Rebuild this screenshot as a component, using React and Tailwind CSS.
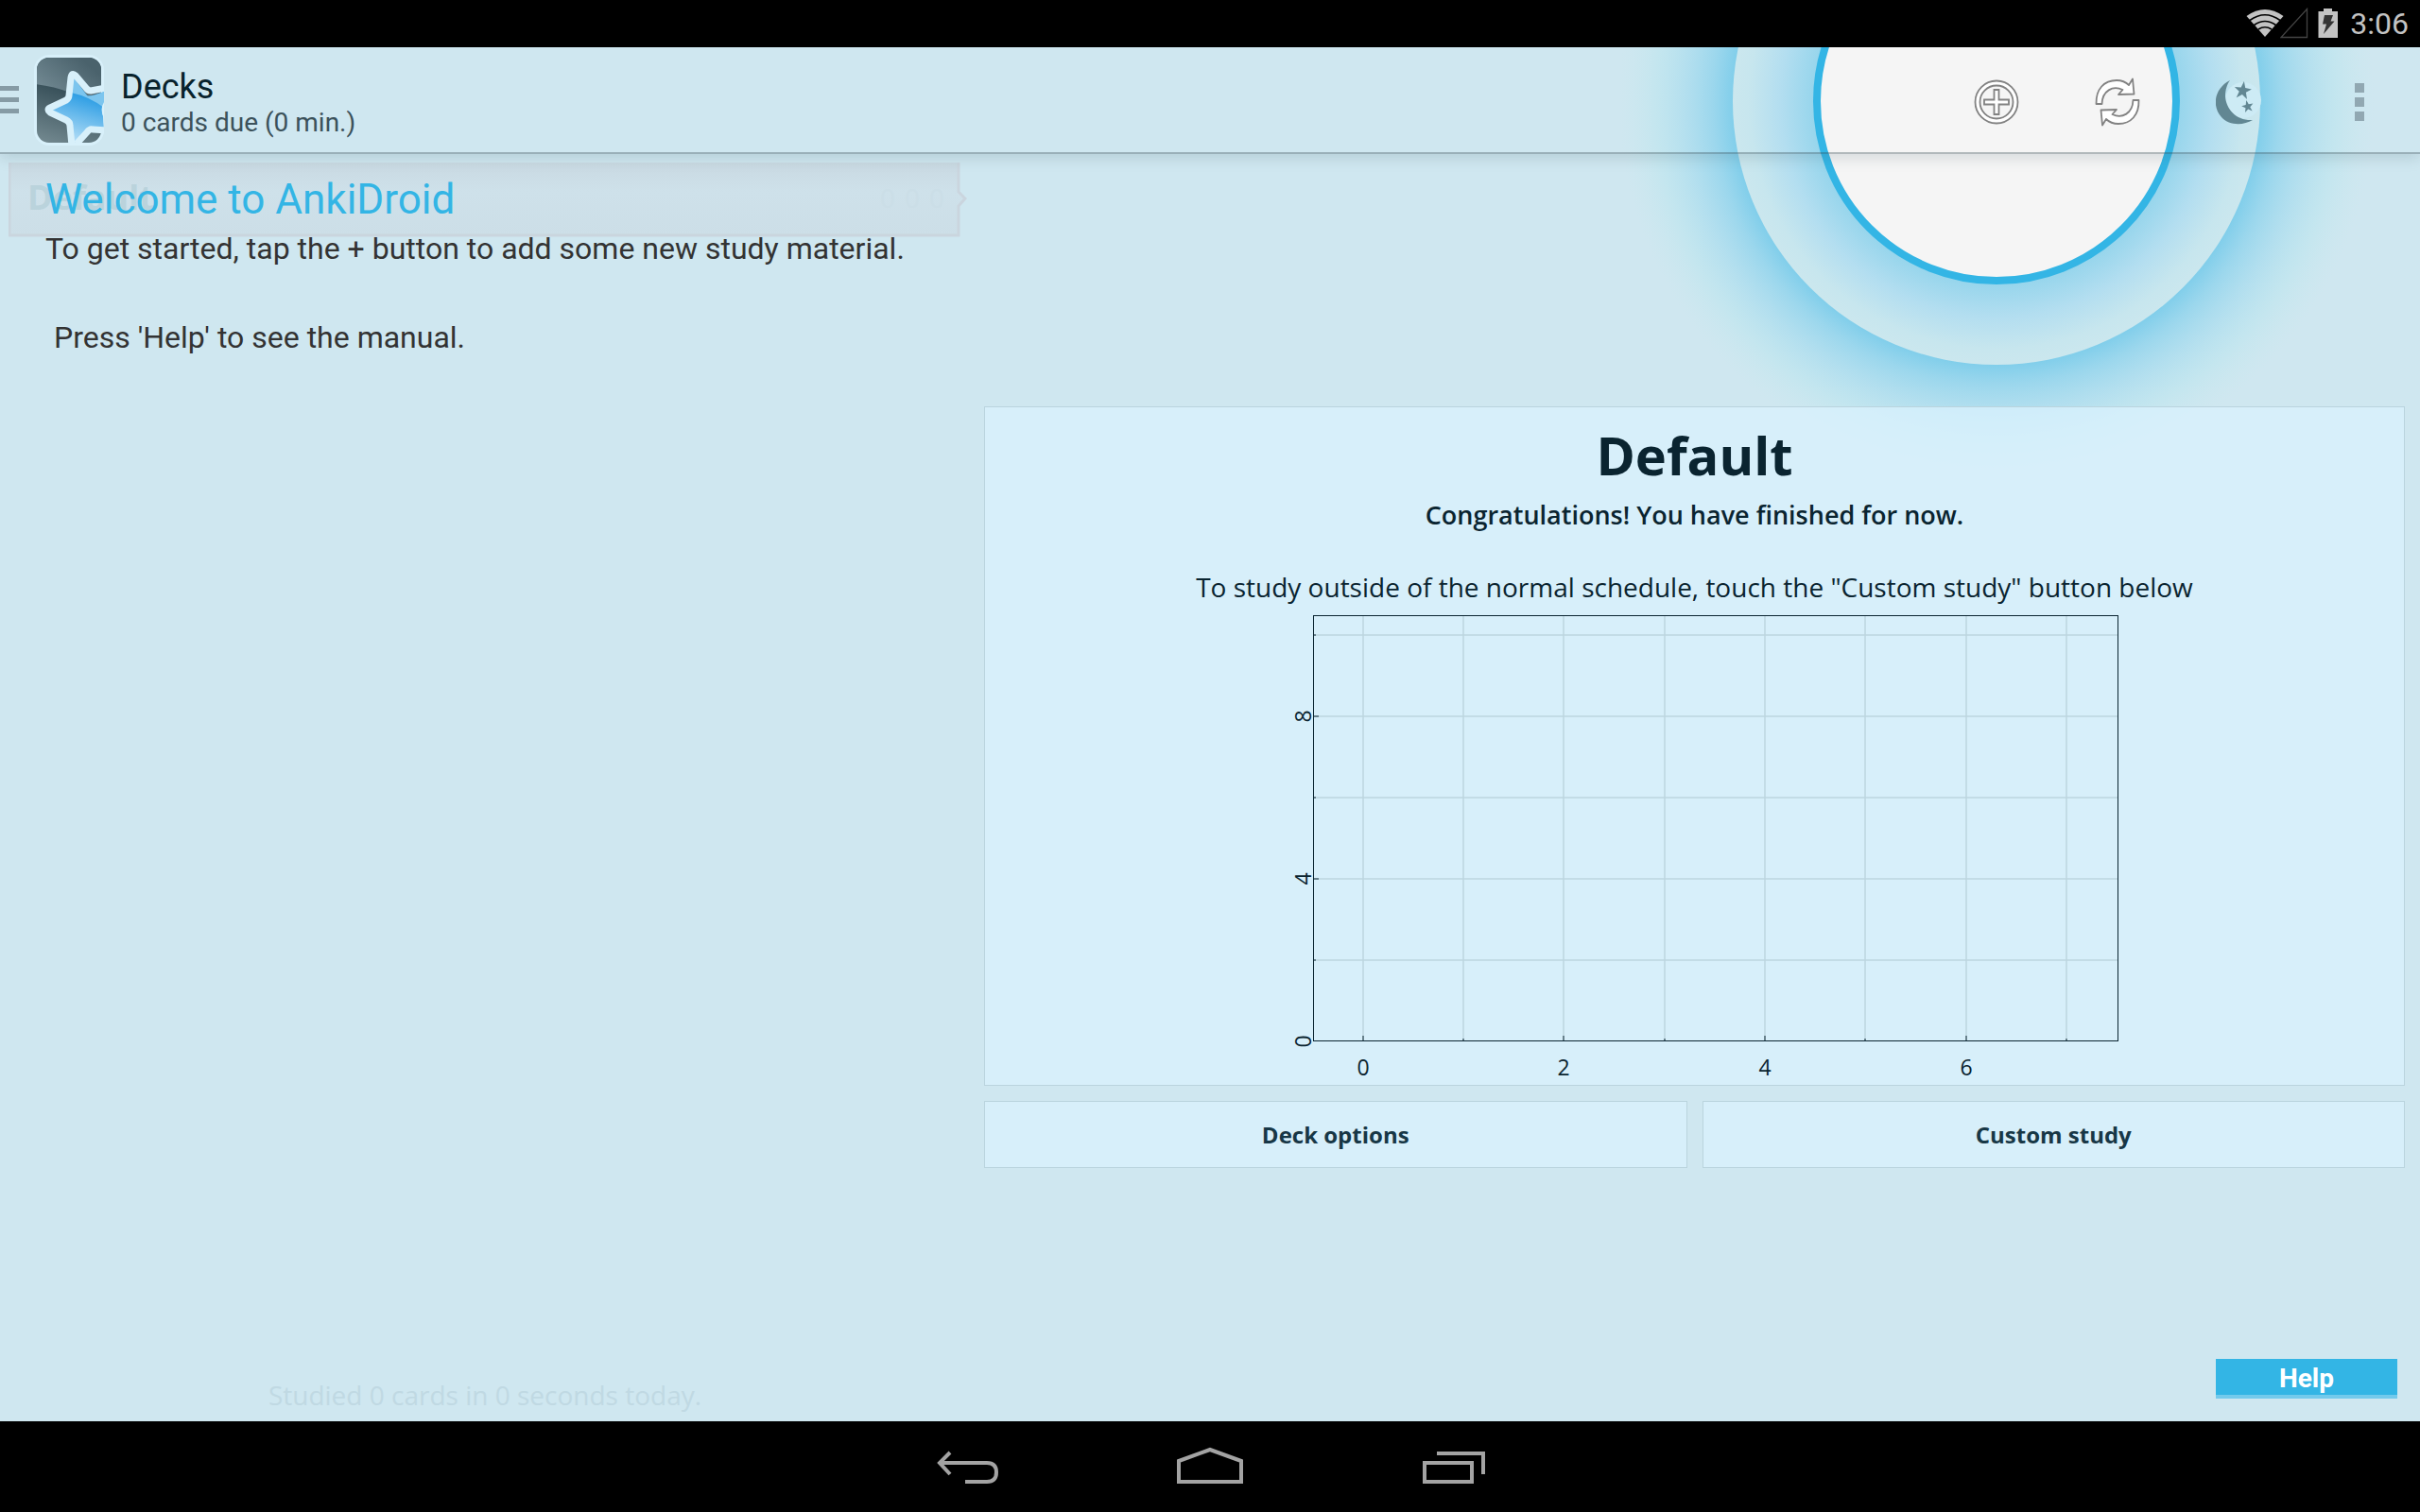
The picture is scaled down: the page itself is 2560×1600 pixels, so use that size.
const STAR = "M50 0L62 36L98 38L69 60L80 96L50 74L20 96L31 60L2 38L38 36Z";

function StatusBar() {
  return (
    <div className="flex h-[50px] shrink-0 items-center justify-end bg-black pr-3 text-[#c3c3c3]">
      <svg width="40" height="34" viewBox="0 0 40 34" aria-label="Wi-Fi">
        <path d="M20 31L0.500 9Q20 -5 39.500 9Z" fill="#c3c3c3" />
        <g fill="none" stroke="#000" strokeWidth="1.600">
          <path d="M4 13.500Q20 2 36 13.500" />
          <path d="M8.500 18.500Q20 10.500 31.500 18.500" />
          <path d="M13 23Q20 18.500 27 23" />
        </g>
      </svg>
      <svg width="30" height="34" viewBox="0 0 30 34" className="-ml-1" aria-label="No signal">
        <path d="M1 31.500H28.500V1.500Z" fill="none" stroke="#444" strokeWidth="1.300" />
      </svg>
      <svg width="22" height="34" viewBox="0 0 22 34" className="ml-2.5" aria-label="Charging">
        <path d="M0.500 32V4H6V1H15V4H21V32Z" fill="#c3c3c3" />
        <path d="M7 8H16L13.500 14.500H17.500L6 28L9 17.500H5Z" fill="#333" />
      </svg>
      <span className="ml-3 text-[32px] leading-[50px]">3:06</span>
    </div>
  );
}

function Spotlight() {
  return (
    <svg
      className="pointer-events-none absolute right-[48px] top-[-343px]"
      width="800"
      height="800"
      viewBox="-400 -400 800 800"
      aria-hidden="true"
    >
      <defs>
        <radialGradient id="outer" gradientUnits="userSpaceOnUse" cx="0" cy="0" r="400">
          <stop offset="0.697" stopColor="#33b5e5" stopOpacity="0.500" />
          <stop offset="0.750" stopColor="#3fbae7" stopOpacity="0.360" />
          <stop offset="0.820" stopColor="#5cc6ea" stopOpacity="0.250" />
          <stop offset="0.900" stopColor="#8fe0ea" stopOpacity="0.180" />
          <stop offset="1" stopColor="#b4ebe9" stopOpacity="0" />
        </radialGradient>
        <radialGradient id="inner" gradientUnits="userSpaceOnUse" cx="0" cy="0" r="279">
          <stop offset="0.690" stopColor="#96d5ec" />
          <stop offset="0.820" stopColor="#b3def0" />
          <stop offset="0.940" stopColor="#c7e6ee" />
          <stop offset="1" stopColor="#cbe7ee" />
        </radialGradient>
      </defs>
      <circle r="400" fill="url(#outer)" />
      <circle r="279" fill="url(#inner)" />
      <circle r="190" fill="#f5f5f5" stroke="#33b5e5" strokeWidth="8" />
    </svg>
  );
}

function Logo() {
  return (
    <svg width="74" height="96" viewBox="0 0 74 96" className="ml-4 shrink-0" aria-label="AnkiDroid">
      <defs>
        <linearGradient id="top" x1="1" y1="0" x2="0" y2="1">
          <stop offset="0.200" stopColor="#4a626c" />
          <stop offset="1" stopColor="#839aa3" />
        </linearGradient>
        <linearGradient id="bottom" x1="0.500" y1="0.200" x2="0.300" y2="1">
          <stop offset="0" stopColor="#263f49" />
          <stop offset="1" stopColor="#72888f" />
        </linearGradient>
        <linearGradient id="star" x1="0.600" y1="0.200" x2="0.400" y2="1">
          <stop offset="0" stopColor="#1f97e2" />
          <stop offset="1" stopColor="#b9e0f7" />
        </linearGradient>
        <clipPath id="card"><rect x="3" y="3" width="68" height="90" rx="13" /></clipPath>
        <clipPath id="starArea"><path d="M0 0H74V93H0Z" /></clipPath>
      </defs>
      <rect width="74" height="96" rx="16" fill="#d8f0fa" />
      <g clipPath="url(#card)">
        <rect width="74" height="96" fill="url(#bottom)" />
        <path d="M0 0H74V60Q40 35 0 31Z" fill="url(#top)" />
      </g>
      <g clipPath="url(#starArea)">
        <path
          d="M41 23L56 43Q58 45 74 39V58Q72 62 74 79L58 78L44 93H40L37 75Q36 72 33 70L15 60V58L34 50Q38 47 38 44Z"
          fill="url(#star)"
        />
        <path d="M41 23L56 43Q58 45 74 39V56Q58 44 39 40Z" fill="#7cc5ee" />
        <g fill="none" stroke="#d8f0fa" strokeWidth="7" strokeLinejoin="round">
          <path d="M76 35L60 38Q57 38 55 35L44 22Q40 18 39 24L37 43Q37 46 34 48L17 56Q13 58 17 61L34 69Q38 71 38 75L40 96" />
          <path d="M45 94L56 82Q59 78 62 79L76 80" />
        </g>
        <path d="M74 50Q69 58 74 67Z" fill="#d8f0fa" />
      </g>
    </svg>
  );
}

function AddIcon() {
  return (
    <svg width="48" height="48" viewBox="0 0 48 48" fill="#fff" stroke="#828282" strokeWidth="1.800" aria-hidden="true">
      <circle cx="24" cy="24" r="22.500" />
      <circle cx="24" cy="24" r="17.500" fill="#f5f5f5" />
      <path d="M21.500 11H26.500V21.500H37V26.500H26.500V37H21.500V26.500H11V21.500H21.500Z" />
    </svg>
  );
}

function SyncIcon() {
  const arrow = "M1.500 28C1 12 10 3 23 3C29 3 33 5 36 8L40 1.500L41.500 17.500L25 18L29.500 13C19 8 8 14 7.500 28Z";
  return (
    <svg width="48" height="52" viewBox="0 0 48 52" fill="#fff" stroke="#828282" strokeWidth="1.800" strokeLinejoin="round" aria-hidden="true">
      <path d={arrow} />
      <path d={arrow} transform="rotate(180 24 26)" />
    </svg>
  );
}

function MoonIcon() {
  return (
    <svg width="48" height="48" viewBox="0 0 48 48" aria-hidden="true">
      <circle cx="29" cy="22" r="19" fill="#cdebf5" />
      <path d="M15 1C-1 9 -5 28 6 40C14 49 29 49 39 43C22 44 11 32 10 18C10 11 12 5 15 1Z" fill="#628793" />
      <path d={STAR} fill="#628793" transform="translate(19 2) rotate(8 10 10) scale(0.190)" />
      <path d={STAR} fill="#628793" transform="translate(27 22) rotate(-12 6 6) scale(0.130)" />
    </svg>
  );
}

function ActionBar() {
  return (
    <header className="relative z-10 flex h-[113px] shrink-0 items-center border-b-2 border-[#33484f]/35 shadow-[0_4px_14px_rgba(60,90,100,0.18)]">
      <button aria-label="Menu" className="flex h-full w-5 shrink-0 flex-col justify-center gap-[7px]">
        <span className="h-[5px] w-full bg-[#869ba5]" />
        <span className="h-[5px] w-full bg-[#869ba5]" />
        <span className="h-[5px] w-full bg-[#869ba5]" />
      </button>
      <Logo />
      <div className="ml-[18px] flex-1 pt-2">
        <h1 className="text-4xl leading-[40px] text-[#08222c]">Decks</h1>
        <p className="text-[28px] leading-9 text-[#3c525b]">0 cards due (0 min.)</p>
      </div>
      <nav className="flex items-center pt-1">
        <button aria-label="Add" className="flex w-32 justify-center"><AddIcon /></button>
        <button aria-label="Sync" className="flex w-32 justify-center"><SyncIcon /></button>
        <button aria-label="Night mode" className="flex w-32 justify-center"><MoonIcon /></button>
        <button aria-label="More options" className="flex w-32 flex-col items-center gap-[5px]">
          <span className="size-[10px] bg-[#91a8b2]" />
          <span className="size-[10px] bg-[#91a8b2]" />
          <span className="size-[10px] bg-[#91a8b2]" />
        </button>
      </nav>
    </header>
  );
}

function DeckRow() {
  return (
    <div className="relative h-20 w-[1014px]">
      <svg className="absolute inset-0" width="1014" height="80" viewBox="0 0 1014 80" aria-hidden="true">
        <defs>
          <linearGradient id="row" x1="0" y1="0" x2="0" y2="1">
            <stop offset="0" stopColor="#c9d9e2" />
            <stop offset="0.400" stopColor="#cee1ea" />
            <stop offset="1" stopColor="#ccdee7" />
          </linearGradient>
        </defs>
        <path d="M1 1H1006V32L1013 39L1006 47V79H1Z" fill="url(#row)" />
        <path d="M1 1V78H1005V47L1012 39L1005 32V1" fill="none" stroke="#cad5de" strokeWidth="3" />
      </svg>
      <div className="relative flex h-full items-center justify-between pb-1 pl-5 pr-6 font-['Open_Sans'] text-[#bad3dc]">
        <span className="text-4xl font-bold">Default</span>
        <span className="flex gap-2.5 text-[28px] text-[#cbdee7]">
          <span>0</span>
          <span>0</span>
          <span>0</span>
        </span>
      </div>
    </div>
  );
}

function Chart() {
  const columns = [53, 159, 265, 372, 478, 584, 691, 797];
  const rows = [21, 107, 193, 279, 365];
  return (
    <svg width="900" height="500" viewBox="-40 0 900 500" className="-mt-1 shrink-0" role="img" aria-label="Cards due forecast">
      <g stroke="#bdd6df" strokeWidth="1.500">
        {columns.map((x) => <path key={x} d={`M${x} 0V451`} />)}
        {rows.map((y) => <path key={y} d={`M0 ${y}H852`} />)}
      </g>
      <g stroke="#0a2430" strokeWidth="1">
        {columns.map((x, i) => <path key={x} d={`M${x} 451v${i % 2 ? -3 : -6}`} />)}
        {rows.map((y, i) => <path key={y} d={`M0 ${y}h${i % 2 ? 6 : 3}`} />)}
      </g>
      <rect x="0.500" y="0.500" width="851" height="450" fill="none" stroke="#0a2430" />
      <g fill="#0a2430" fontFamily="Open Sans" fontSize="23" textAnchor="middle">
        {[0, 2, 4, 6].map((n, i) => <text key={n} x={columns[i * 2]} y="487">{n}</text>)}
        {[[8, 107], [4, 279], [0, 451]].map(([n, y]) => (
          <text key={n} transform={`translate(-2 ${y}) rotate(-90)`}>{n}</text>
        ))}
      </g>
    </svg>
  );
}

function DeckPanel() {
  return (
    <section className="relative flex flex-1 flex-col pr-4 pt-[267px] font-['Open_Sans']">
      <div className="flex h-[719px] flex-col items-center border border-[#bad4de] bg-[#daf2fd]/75 text-[#0a2430]">
        <h2 className="mt-2.5 text-[56px] font-bold leading-[80px]">Default</h2>
        <p className="mt-1 text-[27px] font-semibold leading-10">Congratulations! You have finished for now.</p>
        <p className="mt-9 text-[28px] leading-10">
          To study outside of the normal schedule, touch the "Custom study" button below
        </p>
        <div className="mt-3.5 pl-3"><Chart /></div>
      </div>
      <div className="mt-4 grid grid-cols-2 gap-4 text-2xl font-bold text-[#173746]">
        <button className="h-[71px] border border-[#bad4de] bg-[#d7effa]">Deck options</button>
        <button className="h-[71px] border border-[#bad4de] bg-[#d7effa]">Custom study</button>
      </div>
      <button className="mb-6 ml-auto mr-2 mt-auto h-[42px] w-48 border-b-4 border-[#73caec] bg-[#33b5e5] pt-1 font-['Roboto'] text-[28px] font-bold leading-[34px] text-white">
        Help
      </button>
    </section>
  );
}

function NavBar() {
  return (
    <nav className="flex h-24 shrink-0 items-center justify-center gap-[184px] bg-black pt-1">
      <button aria-label="Back">
        <svg width="72" height="48" viewBox="0 0 72 48" fill="none" stroke="#a3a3a3" strokeWidth="4">
          <path d="M17 7L6 18L17 30M6 18H56Q66 18 66 28T56 38H33" />
        </svg>
      </button>
      <button aria-label="Home">
        <svg width="72" height="48" viewBox="0 0 72 48" fill="none" stroke="#a3a3a3" strokeWidth="4">
          <path d="M3 38V16L36 4L69 16V38Z" />
        </svg>
      </button>
      <button aria-label="Recent apps">
        <svg width="72" height="48" viewBox="0 0 72 48" fill="none" stroke="#a3a3a3" strokeWidth="4">
          <path d="M7 18H57V38H7ZM20 8H69V30" />
        </svg>
      </button>
    </nav>
  );
}

export default function App() {
  return (
    <div className="flex min-h-screen flex-col bg-[#cfe7f0] font-['Roboto',sans-serif]">
      <StatusBar />
      <main className="relative flex flex-1 flex-col overflow-hidden">
        <Spotlight />
        <ActionBar />
        <div className="flex flex-1">
          <section className="flex w-[1041px] shrink-0 flex-col pl-[9px] pt-2">
            <div className="relative">
              <DeckRow />
              <h2 className="absolute left-[39px] top-4 text-[44px] leading-[48px] text-[#33b5e5]">Welcome to AnkiDroid</h2>
            </div>
            <p className="-mt-2 pl-[39px] text-[32px] leading-10 text-[#333]">
              To get started, tap the + button to add some new study material.
            </p>
            <p className="mt-[54px] pl-12 text-[32px] leading-10 text-[#333]">Press 'Help' to see the manual.</p>
            <p className="mb-2 mt-auto pr-6 text-center font-['Open_Sans'] text-[28px] leading-10 text-[#c0d9e3]">
              Studied 0 cards in 0 seconds today.
            </p>
          </section>
          <DeckPanel />
        </div>
      </main>
      <NavBar />
    </div>
  );
}
